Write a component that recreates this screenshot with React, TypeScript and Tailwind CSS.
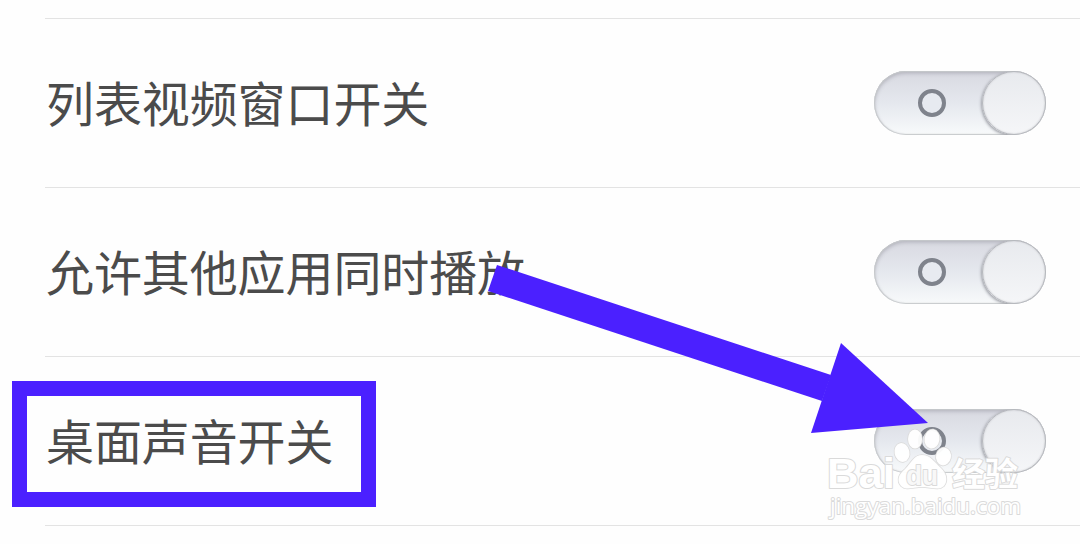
import React from "react";

interface SettingRowProps {
  label: string;
  highlighted?: boolean;
}

const settings: SettingRowProps[] = [
  { label: "列表视频窗口开关" },
  { label: "允许其他应用同时播放" },
  { label: "桌面声音开关", highlighted: true },
];

const ToggleOff: React.FC = () => {
  return (
    <button
      type="button"
      role="switch"
      aria-checked={false}
      className="flex h-16 w-[172px] shrink-0 items-center justify-between overflow-hidden rounded-full bg-linear-to-b from-[#d8d9e1] via-[#e5e8ee] via-50% to-[#f8fafb] shadow-[inset_0_0_1px_1px_#c6c9cb,inset_0_2px_4px_#acacb6]"
    >
      <span className="mb-px ml-11 h-7 w-7 rounded-full border-4 border-[#7f838c] bg-[#e7eaf0]" />
      <span className="h-16 w-16 rounded-full border border-[#b6b8bd] bg-linear-to-b from-[#e8eaee] to-[#f5f6f8] shadow-[-1px_1px_3px_#9b9da4,inset_0_0_2px_#c0c2c7]" />
    </button>
  );
};

const SettingRow: React.FC<SettingRowProps> = ({ label, highlighted = false }) => {
  return (
    <div className="relative ml-[45px] flex h-[169px] items-center justify-between border-b border-[#e3e3e3] pr-[34px]">
      <span className="pb-[5px] pl-px text-[48px] leading-none tracking-[-0.1px] text-[#4b4b4b]">
        {label}
      </span>
      <ToggleOff />
      {highlighted && (
        <div className="absolute top-6 -left-[33px] h-[126px] w-[364px] border-[15px] border-[#4b20ff]" />
      )}
    </div>
  );
};

const Arrow: React.FC = () => {
  return (
    <svg
      className="pointer-events-none absolute inset-0"
      width="1080"
      height="544"
      viewBox="0 0 1080 544"
      fill="#4b20ff"
    >
      <path d="M497 265L831 375L822 401L488 291Z" />
      <path d="M841 343L928 423L811 433Z" />
    </svg>
  );
};

const Watermark: React.FC = () => {
  return (
    <svg
      className="pointer-events-none absolute top-[420px] left-[820px]"
      width="220"
      height="110"
      viewBox="0 0 220 110"
      fill="#ffffff"
      stroke="#dadada"
      strokeWidth="2"
      strokeLinejoin="round"
      paintOrder="stroke"
    >
      <text
        x="7"
        y="68"
        fontSize="42"
        fontFamily="'Liberation Sans', Arial, sans-serif"
        fontWeight="bold"
        textLength="68"
        lengthAdjust="spacingAndGlyphs"
      >
        Bai
      </text>
      {/* paw */}
      <g fillOpacity="0.95" strokeWidth="1.5">
        <ellipse cx="82" cy="32.5" rx="7.5" ry="9.5" transform="rotate(-12 82 32.5)" />
        <ellipse cx="95" cy="19" rx="7" ry="9.5" />
        <ellipse cx="112" cy="19" rx="7.5" ry="9.5" transform="rotate(8 112 19)" />
        <ellipse cx="123.5" cy="36.5" rx="7.5" ry="9" transform="rotate(12 123.5 36.5)" />
        <path d="M102 35C111 35 115 43 121 48C127 54 128 61 124 66C119 71 110 67 102 67C94 67 86 71 81 66C76 60 79 54 85 49C91 43 94 35 102 35Z" />
      </g>
      <text
        x="86"
        y="64.5"
        fontSize="28"
        fontFamily="'Liberation Sans', Arial, sans-serif"
        fontWeight="bold"
        textLength="32"
        lengthAdjust="spacingAndGlyphs"
        fill="#f8f8f8"
      >
        du
      </text>
      <text
        x="132"
        y="66"
        fontSize="33"
        fontFamily="'Noto Sans CJK SC', sans-serif"
        fontWeight="bold"
      >
        经验
      </text>
      <text
        x="10"
        y="94"
        fontSize="22.5"
        fontFamily="'Open Sans', 'Noto Sans', sans-serif"
        fontWeight="500"
        textLength="191"
        lengthAdjust="spacingAndGlyphs"
      >
        jingyan.baidu.com
      </text>
    </svg>
  );
};

const App: React.FC = () => {
  return (
    <div className="relative h-[544px] w-[1080px] overflow-hidden bg-[#fefefe] font-['Noto_Sans_CJK_SC',sans-serif]">
      <div className="ml-[45px] h-[19px] border-b border-[#e3e3e3]" />
      {settings.map((setting) => (
        <SettingRow key={setting.label} {...setting} />
      ))}
      <Arrow />
      <Watermark />
    </div>
  );
};

export default App;
